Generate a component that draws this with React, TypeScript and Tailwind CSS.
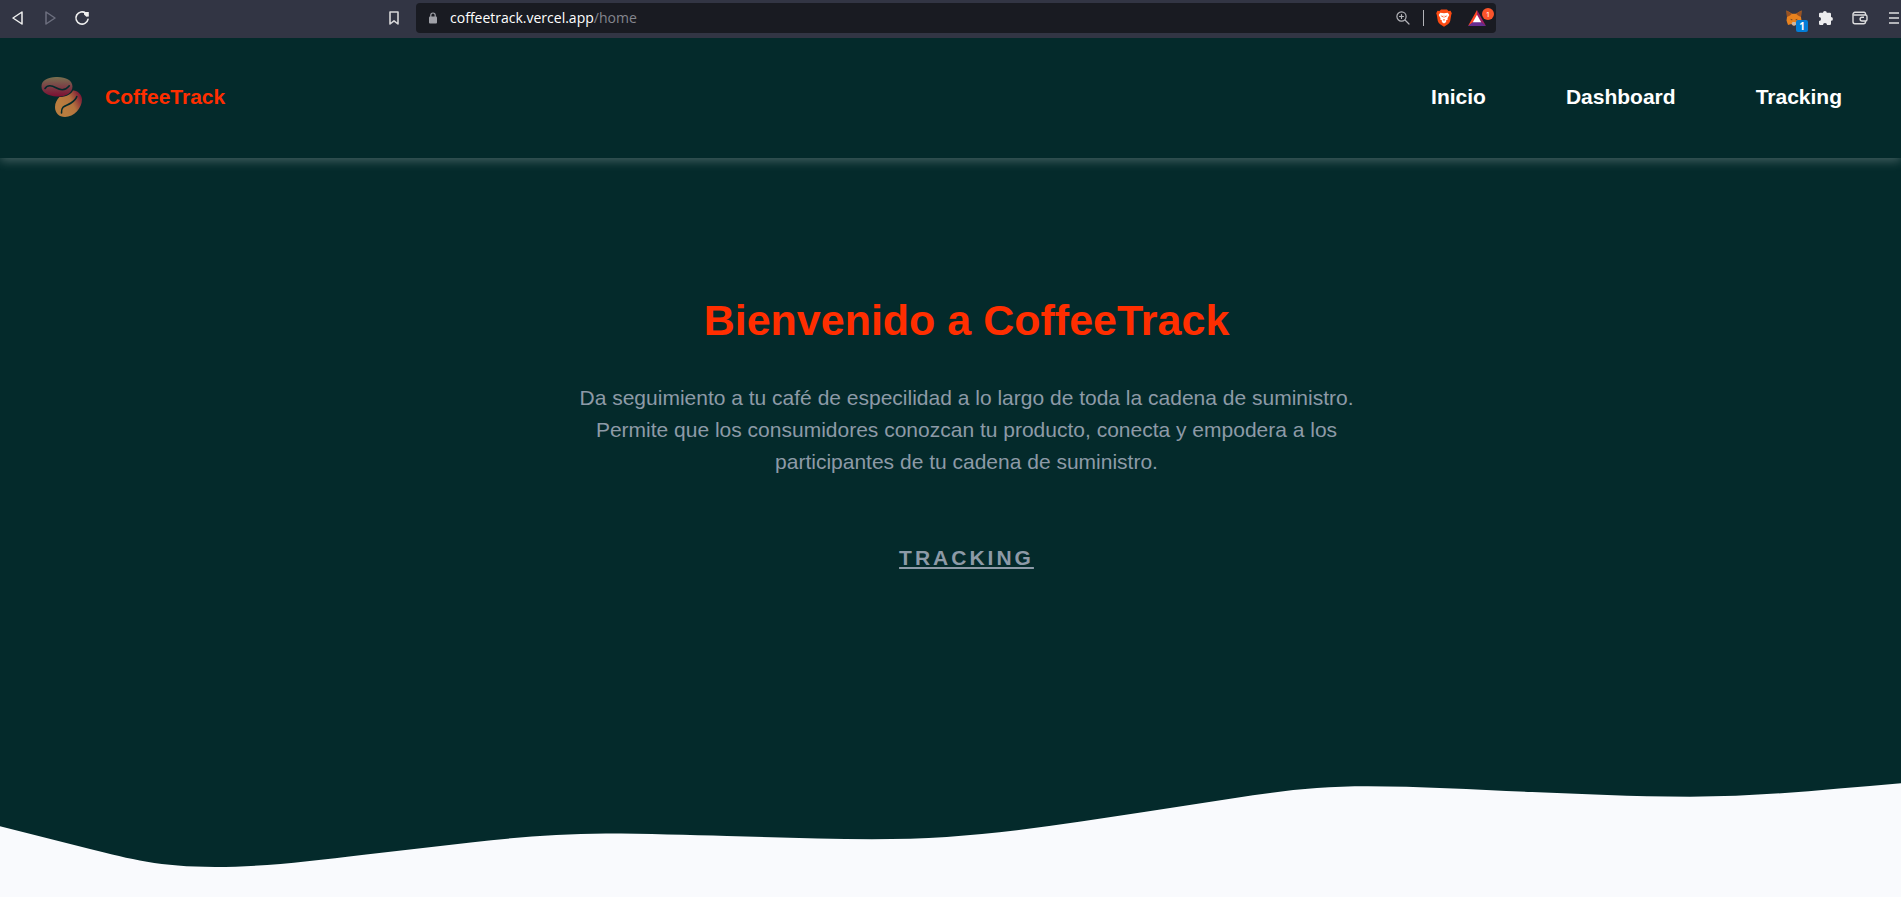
import React from "react";

function BackIcon() {
  return (
    <svg width="14" height="16" viewBox="0 0 14 16" fill="none" stroke="#f0f0f0" strokeWidth="1.5" strokeLinejoin="round" aria-hidden="true">
      <path d="M11 2 L2 8 L11 14 Z" />
    </svg>
  );
}

function ForwardIcon() {
  return (
    <svg width="14" height="16" viewBox="0 0 14 16" fill="none" stroke="#6d6f7f" strokeWidth="1.5" strokeLinejoin="round" aria-hidden="true">
      <path d="M3 2 L12 8 L3 14 Z" />
    </svg>
  );
}

function ReloadIcon() {
  return (
    <svg width="16" height="16" viewBox="0 0 16 16" fill="none" aria-hidden="true">
      <path d="M11.8 3.2 A6.1 6.1 0 1 0 14 9.3" stroke="#f0f0f0" strokeWidth="1.6" strokeLinecap="round" />
      <path d="M10 2 H14.8 V6.6 L12.4 6.8 L10 4.6 Z" fill="#f0f0f0" />
    </svg>
  );
}

function BookmarkIcon() {
  return (
    <svg width="12" height="16" viewBox="0 0 12 16" fill="none" stroke="#d6d6d8" strokeWidth="1.6" strokeLinejoin="round" aria-hidden="true">
      <path d="M2 2 H10 V14 L6 10.8 L2 14 Z" />
    </svg>
  );
}

function LockIcon() {
  return (
    <svg width="10" height="12" viewBox="0 0 10 12" fill="none" aria-hidden="true">
      <rect x="1" y="4.5" width="8" height="7" rx="1" fill="#a0a1a8" />
      <path d="M2.8 5 V3.2 a2.2 2.2 0 0 1 4.4 0 V5" stroke="#a0a1a8" strokeWidth="1.2" />
    </svg>
  );
}

function ZoomIcon() {
  return (
    <svg width="16" height="16" viewBox="0 0 16 16" fill="none" stroke="#b3b4b9" strokeWidth="1.2" strokeLinecap="round" aria-hidden="true">
      <circle cx="6.5" cy="6.5" r="4.6" />
      <path d="M10 10 L14 14 M4.5 6.5 H8.5 M6.5 4.5 V8.5" />
    </svg>
  );
}

function BraveIcon() {
  return (
    <svg width="16" height="18" viewBox="0 0 16 18" aria-hidden="true">
      <path d="M5 0.5 H11 L12.5 2 L14.5 1.8 L15.8 4.2 L15.2 6 L14.2 12 Q13.6 14 11.5 15.5 L8 17.8 L4.5 15.5 Q2.4 14 1.8 12 L0.8 6 L0.2 4.2 L1.5 1.8 L3.5 2 Z" fill="#fb4a12" />
      <path d="M4.2 3.7 L8 4.3 L11.8 3.7 L13.3 6 L11.5 9.2 L11.8 10.6 L10 11.6 L10.2 13 L8 14.6 L5.8 13 L6 11.6 L4.2 10.6 L4.5 9.2 L2.7 6 Z" fill="#fff" />
      <path d="M4.5 6.5 L7 7 L6.5 8.3 Z M11.5 6.5 L9 7 L9.5 8.3 Z M6.8 10.8 L8 10.2 L9.2 10.8 L8 11.7 Z" fill="#fb4a12" />
      <path d="M8 6.5 V9" stroke="#fb4a12" strokeWidth="0.6" />
    </svg>
  );
}

function RewardsIcon() {
  return (
    <svg width="18" height="16" viewBox="0 0 18 16" aria-hidden="true">
      <path d="M9 0 L0 16 L9 10 Z" fill="#ff4724" />
      <path d="M9 0 L18 16 L9 10 Z" fill="#9e1f63" />
      <path d="M0 16 H18 L9 9 Z" fill="#662d91" />
      <path d="M9 4.8 L13.2 12.2 H4.8 Z" fill="#fff" />
    </svg>
  );
}

function FoxIcon() {
  return (
    <svg width="16" height="16" viewBox="0 0 16 16" aria-hidden="true">
      <path d="M0.5 0.5 L6 3.8 H10 L15.5 0.5 L15 7 L15.5 10.5 L14 15 L10.5 14 L9 15.5 H7 L5.5 14 L2 15 L0.5 10.5 L1 7 Z" fill="#e8821e" />
      <path d="M0.5 0.5 L6 3.8 L4 5.5 L1 7 Z M15.5 0.5 L10 3.8 L12 5.5 L15 7 Z" fill="#9a5222" />
      <path d="M5.5 14 L6.5 12 H9.5 L10.5 14 L9 15.5 H7 Z" fill="#c9b5a5" />
      <path d="M4 8.8 L6.5 9.5 L6 10.5 Z M12 8.8 L9.5 9.5 L10 10.5 Z" fill="#5a3a24" />
    </svg>
  );
}

function PuzzleIcon() {
  return (
    <svg width="16" height="16" viewBox="0 0 16 16" fill="#ededef" aria-hidden="true">
      <path d="M5 2.8 a1.9 1.9 0 0 1 3.8 0 H11.8 a1.2 1.2 0 0 1 1.2 1.2 V7 a1.9 1.9 0 0 1 0 3.8 V13.8 a1.2 1.2 0 0 1 -1.2 1.2 H9 a2 2 0 0 0 -4 0 H2.2 A1.2 1.2 0 0 1 1 13.8 V11 a2 2 0 0 0 0 -4 V4 A1.2 1.2 0 0 1 2.2 2.8 Z" />
    </svg>
  );
}

function WalletIcon() {
  return (
    <svg width="16" height="14" viewBox="0 0 16 14" fill="none" stroke="#dededf" strokeWidth="1.4" strokeLinejoin="round" aria-hidden="true">
      <path d="M13.5 4 V2.8 a1.5 1.5 0 0 0 -1.5 -1.5 H3 A2 2 0 0 0 1 3.300 V10.700 a2 2 0 0 0 2 2 H11.500 A2 2 0 0 0 13.500 10.700 V10" />
      <path d="M1.300 4 H13.500 a1.500 1.500 0 0 1 1.500 1.500 V8.500 a1.500 1.500 0 0 1 -1.500 1.500 H10 a1.900 1.900 0 0 1 0 -3.800 H12" />
    </svg>
  );
}

function MenuIcon() {
  return (
    <svg width="12" height="12" viewBox="0 0 12 12" stroke="#dededf" strokeWidth="1.5" aria-hidden="true">
      <path d="M1 1 H11 M1 6 H11 M1 11 H11" />
    </svg>
  );
}

function BeansLogo() {
  return (
    <svg width="42" height="42" viewBox="0 0 42 42" aria-hidden="true">
      <defs>
        <linearGradient id="beanTop" x1="0" y1="0" x2="0" y2="1">
          <stop offset="0" stopColor="#79714f" />
          <stop offset="0.5" stopColor="#7b3f46" />
          <stop offset="1" stopColor="#7c0f32" />
        </linearGradient>
        <linearGradient id="beanBottom" x1="0.3" y1="0.6" x2="1" y2="0.25">
          <stop offset="0" stopColor="#b97d3f" />
          <stop offset="0.45" stopColor="#b4733e" />
          <stop offset="1" stopColor="#7c1636" />
        </linearGradient>
      </defs>
      <path d="M32 14.500 C36 14 41 18.500 41 23.500 C41 32 33 41 24 41 C18 41 14 37 14 31 C14 27 16 23.500 18.500 21 C25 21 30 18.500 32 14.500 Z" fill="url(#beanBottom)" />
      <path d="M20.500 37 C20 29 26 30 30 27 C33.500 24.500 35 23 35.800 20.500" fill="none" stroke="#042a2b" strokeWidth="1.6" strokeLinecap="round" />
      <path d="M15 1 C24 0.500 31.500 4 31.500 10.500 C31.500 17.500 24 21 16 20.500 C7 20 0.500 16.500 0.500 10.500 C0.500 4 7 1.300 15 1 Z" fill="url(#beanTop)" />
      <path d="M4 12.500 C7 8 11 9.500 15 11.800 C20 14.700 25 14 28.300 9.800" fill="none" stroke="#042a2b" strokeWidth="1.6" strokeLinecap="round" />
    </svg>
  );
}

function BrowserBar() {
  return (
    <div className="relative z-10 grid h-[38px] grid-cols-[416fr_1080fr_405fr] items-center bg-[#323544] pb-0.5 font-['Open_Sans',sans-serif]">
      <div className="flex items-center justify-between pr-4 pl-2.5">
        <div className="flex items-center gap-4">
          <button type="button" aria-label="Back" className="flex w-4 justify-center"><BackIcon /></button>
          <button type="button" aria-label="Forward" className="flex w-4 justify-center"><ForwardIcon /></button>
          <button type="button" aria-label="Reload" className="flex w-4 justify-center"><ReloadIcon /></button>
        </div>
        <button type="button" aria-label="Bookmark"><BookmarkIcon /></button>
      </div>
      <div className="flex h-[30px] items-center rounded-sm bg-[#191b22] pr-0.5 pl-3">
        <LockIcon />
        <p className="ml-3 flex-1 text-sm text-[#84868e]">
          <span className="text-white">coffeetrack.vercel.app</span>/home
        </p>
        <div className="flex items-center">
          <button type="button" aria-label="Zoom"><ZoomIcon /></button>
          <span className="mx-3 h-4 w-px bg-[#b3b4b9]" />
          <button type="button" aria-label="Shields"><BraveIcon /></button>
          <button type="button" aria-label="Rewards" className="relative ml-4 pr-2">
            <RewardsIcon />
            <span className="absolute -top-0.5 right-0 flex size-3 items-center justify-center rounded-full bg-[#fb542b] text-[8px] leading-3 text-white">1</span>
          </button>
        </div>
      </div>
      <div className="flex items-center justify-end pr-px">
        <button type="button" aria-label="Wallet extension" className="relative mr-4">
          <FoxIcon />
          <span className="absolute -right-1.5 -bottom-1.5 flex size-3 items-center justify-center rounded-xs bg-[#037dd6] text-[10px] leading-3 font-bold text-white">1</span>
        </button>
        <button type="button" aria-label="Extensions" className="mr-[18px]"><PuzzleIcon /></button>
        <button type="button" aria-label="Wallet" className="mr-5"><WalletIcon /></button>
        <button type="button" aria-label="Menu"><MenuIcon /></button>
      </div>
    </div>
  );
}

function SiteHeader() {
  return (
    <header className="relative flex h-[120px] items-center justify-between bg-[#042a2b] pr-[59px] pb-0.5 pl-[41px] text-[21px] font-bold shadow-[0_3px_10px_rgba(255,255,255,0.25)]">
      <a href="#home" className="flex items-center gap-[22px] text-[#ff2e00]">
        <BeansLogo />
        <span>CoffeeTrack</span>
      </a>
      <nav className="flex gap-20 text-white">
        <a href="#inicio">Inicio</a>
        <a href="#dashboard">Dashboard</a>
        <a href="#tracking">Tracking</a>
      </nav>
    </header>
  );
}

function Hero() {
  return (
    <main className="flex flex-1 flex-col justify-between bg-[#042a2b]">
      <section className="flex flex-col items-center pt-[130px] pl-8 text-center">
        <h1 className="text-[43px] leading-[64px] font-bold text-[#ff2e00]">Bienvenido a CoffeeTrack</h1>
        <p className="mt-[30px] max-w-[800px] text-[21px] leading-8 text-[#8d9aa7]">
          Da seguimiento a tu café de especilidad a lo largo de toda la cadena de suministro. Permite que los
          consumidores conozcan tu producto, conecta y empodera a los participantes de tu cadena de suministro.
        </p>
        <a href="#tracking" className="mt-16 text-[21px] leading-8 font-bold tracking-[3px] text-[#8d9aa7] uppercase underline">
          Tracking
        </a>
      </section>
      <svg className="block h-[127px] w-full" viewBox="0 0 1901 127" preserveAspectRatio="none" aria-hidden="true">
        <path
          fill="#f9fafd"
          d="M0 56.300 L91 79.300 C130 89 160 97 215 97 C265 97 310 91 364 84.700 L473 72.300 C515 67.500 560 63.500 606 63.500 C645 63.500 690 65 727 66 C775 67.300 825 69.300 872 69.300 C925 69.300 970 66 1017 60.300 C1060 55 1102 48 1144 42 L1253 25.300 C1290 19.800 1325 16.300 1368 16.300 C1420 16.300 1478 20 1532 22 C1582 24 1630 26.700 1690 26.700 C1765 26.700 1830 19 1901 13.300 V127 H0 Z"
        />
      </svg>
    </main>
  );
}

export default function App() {
  return (
    <div className="flex min-h-screen flex-col font-['Liberation_Sans',Arial,sans-serif]">
      <BrowserBar />
      <SiteHeader />
      <Hero />
    </div>
  );
}
